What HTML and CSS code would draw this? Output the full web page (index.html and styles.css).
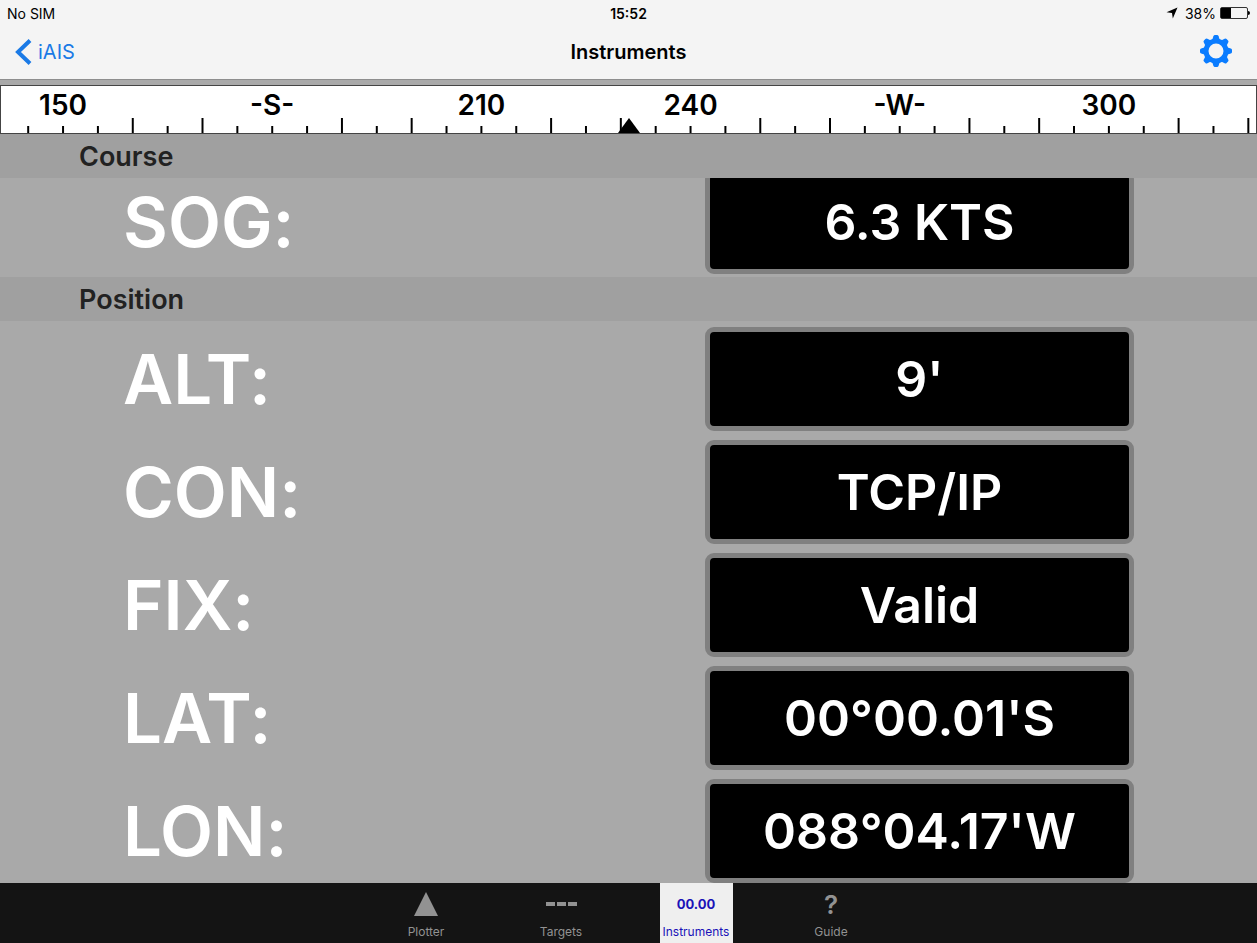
FILE: index.html
```html
<!DOCTYPE html>
<html lang="en">
<head>
    <meta charset="UTF-8">
    <meta name="viewport" content="width=device-width, initial-scale=1.0">
    <title>Instruments</title>
    <link rel="stylesheet" href="styles.css">
</head>
<body>
    <header class="top">
        <div class="status-bar">
            <span>No SIM</span>
            <span class="time">15:52</span>
            <span class="power">
                <svg width="12" height="12" viewBox="0 0 12 12"><path d="M11.5 0.5L6.8 11.5L6 6L0.5 5.2Z"/></svg>
                <span class="percent">38%</span>
                <svg width="30" height="12" viewBox="0 0 30 12">
                    <rect x="0.5" y="0.5" width="27" height="11" rx="1.5" fill="none" stroke="#333"/>
                    <rect x="1" y="1" width="10" height="10"/>
                    <path d="M28 4q2 0 2 2t-2 2z"/>
                </svg>
            </span>
        </div>
        <nav class="nav-bar">
            <a href="#" class="back">
                <svg width="17" height="26" viewBox="0 0 17 26"><path d="M15 1.5L3 13L15 24.5" fill="none" stroke="currentColor" stroke-width="4"/></svg>
                iAIS
            </a>
            <h1>Instruments</h1>
            <button class="settings" aria-label="Settings">
                <svg width="32" height="32" viewBox="-16 -16 32 32" fill="currentColor">
                    <circle r="10" fill="none" stroke="currentColor" stroke-width="5"/>
                    <g id="teeth">
                        <path id="tooth" d="M-3.8 -11L-2.6 -14.8Q-2.2 -16 -1 -16H1Q2.2 -16 2.6 -14.8L3.8 -11Z"/>
                        <use href="#tooth" transform="rotate(45)"/>
                        <use href="#tooth" transform="rotate(90)"/>
                        <use href="#tooth" transform="rotate(135)"/>
                    </g>
                    <use href="#teeth" transform="rotate(180)"/>
                </svg>
            </button>
        </nav>
    </header>

    <div class="compass">
        <svg id="scale" width="100%" height="47"></svg>
        <svg class="pointer" width="22" height="15" viewBox="0 0 22 15"><path d="M11 0L22 15H0Z"/></svg>
    </div>

    <main class="list" id="list">
        <section>
            <h2>Course</h2>
            <dl>
                <div class="row"><dt>SOG:</dt><dd>6.3 KTS</dd></div>
            </dl>
        </section>
        <section>
            <h2>Position</h2>
            <dl>
                <div class="row"><dt>ALT:</dt><dd>9'</dd></div>
                <div class="row"><dt>CON:</dt><dd>TCP/IP</dd></div>
                <div class="row"><dt>FIX:</dt><dd>Valid</dd></div>
                <div class="row"><dt>LAT:</dt><dd>00°00.01'S</dd></div>
                <div class="row"><dt>LON:</dt><dd>088°04.17'W</dd></div>
            </dl>
        </section>
    </main>

    <footer class="tabs">
        <button class="tab">
            <span class="icon"><svg width="24" height="24" viewBox="0 0 24 24"><path d="M12 0L24 24H0Z" fill="currentColor"/></svg></span>
            Plotter
        </button>
        <button class="tab">
            <span class="icon"><svg width="31" height="4" viewBox="0 0 31 4"><path d="M0 0h9v4H0zM11 0h9v4h-9zM22 0h9v4h-9z" fill="currentColor"/></svg></span>
            Targets
        </button>
        <button class="tab active">
            <span class="icon digits">00.00</span>
            Instruments
        </button>
        <button class="tab">
            <span class="icon help">?</span>
            Guide
        </button>
    </footer>

    <script>
        const heading = 231.1;
        const span = 180;
        const names = { 0: '-N-', 90: '-E-', 180: '-S-', 270: '-W-' };

        function drawScale() {
            const start = heading - span / 2;
            let marks = '';
            for (let deg = Math.ceil(start / 5) * 5; deg <= start + span; deg += 5) {
                const x = ((deg - start) / span * 100).toFixed(3) + '%';
                // the tens between two labels get the long mark
                const top = deg % 10 === 0 && deg % 30 !== 0 ? 32 : 40;
                marks += `<line x1="${x}" x2="${x}" y1="${top}" y2="47"/>`;
                if (deg % 30 === 0) {
                    marks += `<text x="${x}" y="29">${names[deg % 360] || deg % 360}</text>`;
                }
            }
            document.getElementById('scale').innerHTML = marks;
        }

        drawScale();
        document.getElementById('list').scrollTop = 14;
    </script>
</body>
</html>
```

FILE: styles.css
```css
* {
    box-sizing: border-box;
}
body {
    margin: 0;
    height: 100vh;
    display: flex;
    flex-direction: column;
    font-family: Inter, "Liberation Sans", sans-serif;
    background-color: #a9a9a9;
    color: #000;
}
svg {
    display: block;
}
button {
    border: none;
    padding: 0;
    background: none;
    font-family: inherit;
    cursor: pointer;
}
.top {
    background-color: #f4f4f4;
    border-bottom: 1px solid #8e8e8e;
}
.status-bar,
.nav-bar {
    display: grid;
    grid-template-columns: 1fr auto 1fr;
    align-items: center;
}
.status-bar {
    height: 26px;
    padding: 0 7px;
    font-size: 14px;
}
.time {
    font-weight: 600;
}
.power {
    display: flex;
    justify-content: flex-end;
    align-items: center;
}
.percent {
    margin: 0 4px 0 7px;
}
.nav-bar {
    height: 53px;
    padding: 0 15px 2px;
}
.back {
    display: flex;
    align-items: center;
    gap: 6px;
    color: #1a7ae6;
    font-size: 20px;
    text-decoration: none;
}
h1 {
    margin: 0;
    font-size: 20px;
    font-weight: 600;
}
.settings {
    justify-self: end;
    padding: 0 10px 2px;
    color: #0a7cff;
}
.compass {
    position: relative;
    margin-top: 5px;
    background-color: #fff;
    border: 1px solid #444;
}
#scale line {
    stroke: #000;
    stroke-width: 2px;
}
#scale text {
    font-size: 28px;
    font-weight: 600;
    text-anchor: middle;
}
.pointer {
    position: absolute;
    left: 50%;
    bottom: 0;
    transform: translateX(-50%);
}
.list {
    flex: 1;
    min-height: 0;
    overflow-y: auto;
    scrollbar-width: none;
}
h2 {
    position: sticky;
    top: 0;
    margin: 0;
    padding: 2px 0 0 79px;
    background-color: #a0a0a0;
    color: #222;
    font-size: 27px;
    font-weight: 600;
    line-height: 42px;
}
dl {
    margin: 0;
}
.row {
    display: flex;
    justify-content: space-between;
    align-items: center;
    height: 113px;
    padding: 2px 123px 0;
    color: #fff;
    font-weight: 600;
    font-variant-ligatures: no-contextual;
}
dt {
    font-size: 69px;
}
dd {
    width: 429px;
    margin: 0;
    border: 5px solid #808080;
    border-radius: 9px;
    background-color: #000;
    font-size: 50px;
    line-height: 94px;
    text-align: center;
}
.tabs {
    display: flex;
    justify-content: center;
    gap: 62px;
    height: 60px;
    background-color: #141414;
}
.tab {
    display: flex;
    flex-direction: column;
    align-items: center;
    width: 73px;
    padding-top: 5px;
    color: #929292;
    font-size: 12px;
    white-space: nowrap;
}
.icon {
    display: flex;
    justify-content: center;
    align-items: center;
    height: 32px;
    margin-bottom: 4px;
}
.digits {
    font-size: 13px;
    font-weight: 700;
}
.help {
    font-size: 26px;
    font-weight: 600;
}
.active {
    background-color: #efefef;
    color: #1a12b8;
}
```
